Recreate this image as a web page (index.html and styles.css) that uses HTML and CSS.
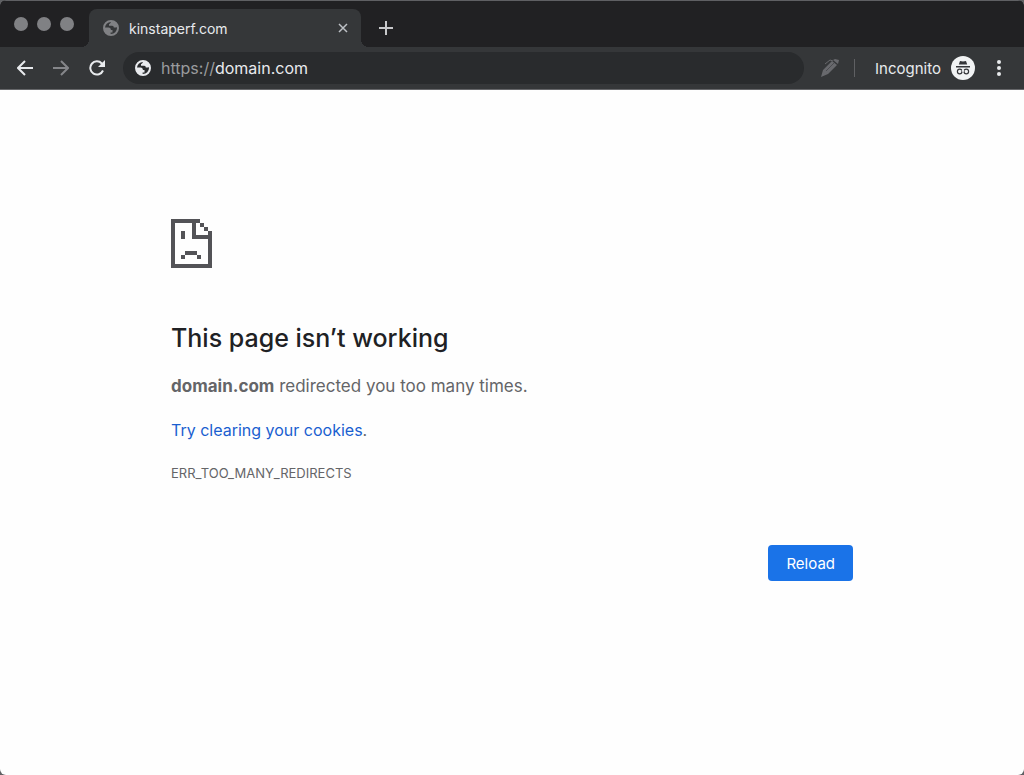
FILE: index.html
```
<!DOCTYPE html>
<html lang="en">
<head>
    <meta charset="UTF-8">
    <meta name="viewport" content="width=device-width, initial-scale=1.0">
    <title>domain.com</title>
    <link rel="stylesheet" href="styles.css">
</head>
<body>
    <svg class="defs" aria-hidden="true">
        <symbol id="globe" viewBox="0 0 16 16">
            <circle cx="8" cy="8" r="7" fill="none" stroke="currentColor" stroke-width="2"/>
            <path fill="currentColor" d="M8 1c0 2-.8 2.600-2 3v1.800h3.200c1 0 1.600.7 1.600 1.700h1.600c1 0 1.600-.4 2.400-1.200L14 3.500 11 1zM1.200 7.500h4.300c1.500 0 2.400 1 2.400 2.400h1.600v2.600H7.600V15L4 14 1 10.500z"/>
        </symbol>
    </svg>
    <div class="window">
        <header>
            <div class="tab-bar">
                <div class="lights">
                    <span></span>
                    <span></span>
                    <span></span>
                </div>
                <div class="tab">
                    <svg class="globe" aria-hidden="true"><use href="#globe"/></svg>
                    <span class="tab-title">kinstaperf.com</span>
                    <button class="close" aria-label="Close tab">
                        <svg width="10" height="10" viewBox="0 0 10 10"><path d="M1 1l8 8M9 1L1 9"/></svg>
                    </button>
                </div>
                <button class="new-tab" aria-label="New tab">
                    <svg width="14" height="14" viewBox="0 0 14 14"><path d="M7 0v14M0 7h14"/></svg>
                </button>
            </div>
            <div class="toolbar">
                <button aria-label="Back">
                    <svg width="16" height="16" viewBox="0 0 16 16"><path d="M16 8H2M8 1L1 8l7 7"/></svg>
                </button>
                <button class="forward" aria-label="Forward">
                    <svg width="16" height="16" viewBox="0 0 16 16"><path d="M0 8h14M8 1l7 7-7 7"/></svg>
                </button>
                <button aria-label="Reload page">
                    <svg width="16" height="16" viewBox="0 0 16 16">
                        <path d="M14 10.500A6.600 6.600 0 1 1 12.800 3.500L14.500 5.500"/>
                        <path class="solid" d="M16 0v7H9z"/>
                    </svg>
                </button>
                <a class="address" href="#">
                    <svg class="globe" aria-hidden="true"><use href="#globe"/></svg>
                    <span><span class="scheme">https://</span>domain.com</span>
                </a>
                <button class="pen" aria-label="Extension">
                    <svg width="20" height="20" viewBox="0 0 20 20">
                        <path class="solid" d="M1 19l2-7L12 3l5 4-9 9zM13 2l2-1 4 1-1 4z"/>
                        <path class="thin" d="M5 6l5-4 3 1"/>
                        <path class="nib" d="M6 13l8-8"/>
                    </svg>
                </button>
                <span class="divider"></span>
                <span class="mode">Incognito</span>
                <svg class="avatar" width="24" height="24" viewBox="0 0 24 24" aria-hidden="true">
                    <circle cx="12" cy="12" r="12" fill="#f1f3f4"/>
                    <path fill="#35363a" d="M9 5l3 .6L15 5l1.200 3.500H7.800zM5 10h14v1.400H5z"/>
                    <g fill="none" stroke="#35363a" stroke-width="1.200">
                        <circle cx="8.700" cy="15.500" r="2.300"/>
                        <circle cx="15.300" cy="15.500" r="2.300"/>
                        <path d="M11 15.200q1-.7 2 0"/>
                    </g>
                </svg>
                <button class="menu" aria-label="Menu">
                    <svg width="4" height="16" viewBox="0 0 4 16">
                        <circle cx="2" cy="2" r="2"/><circle cx="2" cy="8" r="2"/><circle cx="2" cy="14" r="2"/>
                    </svg>
                </button>
            </div>
        </header>
        <main>
            <svg class="sad-page" width="41" height="49" viewBox="0 0 41 49" shape-rendering="crispEdges" aria-hidden="true">
                <path d="M0 0h29v4h4v4h4v4h4v37H0zM4 4v41h33V20H21V4zM25 4v12h12v-4h-4V8h-4V4z" fill-rule="evenodd"/>
                <path d="M10 12h4v8h-4zM14 32h12v4H14zM10 36h4v4h-4zM26 36h4v4h-4z"/>
            </svg>
            <h1>This page isn’t working</h1>
            <p class="summary"><strong>domain.com</strong> redirected you too many times.</p>
            <p class="hint"><a href="#">Try clearing your cookies</a>.</p>
            <p class="code">ERR_TOO_MANY_REDIRECTS</p>
            <div class="actions">
                <button class="reload">Reload</button>
            </div>
        </main>
    </div>
</body>
</html>
```
FILE: styles.css
```
* {
    box-sizing: border-box;
}
body {
    margin: 0;
    background-color: #5f6063;
    font-family: Inter, "Liberation Sans", sans-serif;
}
button {
    border: 0;
    padding: 0;
    background: none;
    color: inherit;
    font-family: inherit;
    cursor: pointer;
}
svg {
    display: block;
    flex: none;
}
.defs {
    display: none;
}
.window {
    min-height: 100vh;
    border-radius: 6px;
    overflow: hidden;
    background-color: #fefefe;
}
header {
    background-color: #353739;
    color: #e8eaed;
    border-bottom: 1px solid #66676a;
}
header path {
    fill: none;
    stroke: currentColor;
    stroke-width: 2;
}
header path.solid {
    fill: currentColor;
    stroke: none;
}

/* Tab strip */
.tab-bar {
    display: flex;
    height: 47px;
    padding-top: 8px;
    background-color: #212123;
    border-top: 1px solid #5f6063;
}
.lights {
    display: flex;
    gap: 9px;
    width: 89px;
    padding: 8px 0 0 14px;
}
.lights span {
    width: 14px;
    height: 14px;
    border-radius: 50%;
    background-color: #808184;
}
.tab {
    position: relative;
    display: flex;
    align-items: center;
    width: 272px;
    padding: 0 12px 0 14px;
    border-radius: 8px 8px 0 0;
    background-color: #353739;
    font-size: 14px;
}
.tab::before,
.tab::after {
    content: "";
    position: absolute;
    bottom: 0;
    width: 8px;
    height: 8px;
}
.tab::before {
    right: 100%;
    background: radial-gradient(circle at 0 0, transparent 8px, #353739 8px);
}
.tab::after {
    left: 100%;
    background: radial-gradient(circle at 100% 0, transparent 8px, #353739 8px);
}
.globe {
    width: 16px;
    height: 16px;
}
.tab .globe {
    color: #808184;
}
.tab-title {
    flex: 1;
    margin-left: 10px;
}
.close {
    padding: 1px;
    color: #bdc1c6;
}
.close path {
    stroke-width: 1.5;
}
.new-tab {
    margin-left: 18px;
    color: #c8c9cb;
}

/* Toolbar */
.toolbar {
    display: flex;
    align-items: center;
    gap: 20px;
    height: 42px;
    padding: 0 23px 0 17px;
    font-size: 15px;
}
.forward {
    color: #85868a;
}
.address {
    display: flex;
    flex: 1;
    align-items: center;
    gap: 10px;
    height: 32px;
    margin-right: -4px;
    margin-left: -2px;
    padding-left: 12px;
    border-radius: 16px;
    background-color: #292b2d;
    color: #e8eaed;
    font-size: 16px;
    text-decoration: none;
}
.scheme {
    color: #9a9b9e;
}
.pen {
    color: #68696d;
}
header .thin {
    stroke-width: 1;
}
header .nib {
    stroke: #4b4c50;
    stroke-width: 1;
}
.divider {
    width: 1px;
    height: 18px;
    margin-left: -6px;
    background-color: #5f6063;
}
.mode {
    margin-right: -10px;
}
.avatar {
    margin-right: 2px;
}
header .avatar path[fill] {
    fill: #35363a;
    stroke: none;
}
.menu {
    fill: currentColor;
}

/* Error page */
main {
    max-width: 682px;
    margin: 0 auto;
    padding-top: 129px;
    color: #646568;
}
.sad-page {
    fill: #535357;
}
h1 {
    margin: 52px 0 0;
    color: #202124;
    font-size: 25px;
    font-weight: 500;
    line-height: 36px;
}
p {
    margin: 0;
    line-height: 24px;
}
.summary {
    margin-top: 18px;
    font-size: 17px;
}
.hint {
    margin-top: 20px;
    font-size: 16px;
}
.hint a {
    color: #1a5fd0;
    text-decoration: none;
}
.code {
    margin-top: 19px;
    font-size: 13px;
}
.actions {
    display: flex;
    justify-content: flex-end;
    margin-top: 60px;
}
.reload {
    height: 36px;
    padding: 0 18px;
    border-radius: 4px;
    background-color: #1a73e8;
    color: #fff;
    font-size: 15px;
}
```
